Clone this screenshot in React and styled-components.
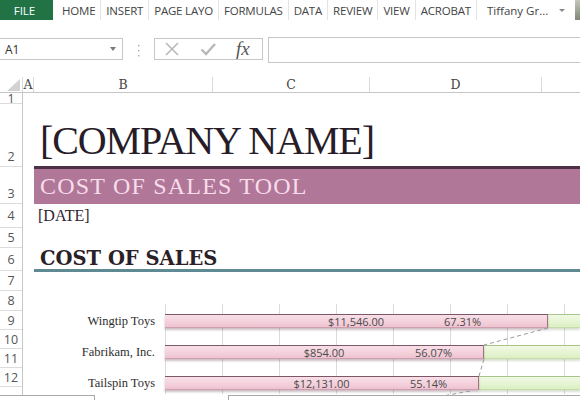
import React from 'react';
import styled, { createGlobalStyle } from 'styled-components';

const Global = createGlobalStyle`
  html, body { margin: 0; padding: 0; background: #fff; overflow: hidden; }
  #root { width: 580px; height: 400px; }
  * { box-sizing: border-box; }
`;

const Page = styled.div`
  position: relative;
  width: 580px;
  height: 400px;
  overflow: hidden;
  background: #fff;
  display: flex;
  flex-direction: column;
  font-family: "Open Sans", "Noto Sans", sans-serif;
`;

/* ---------- Ribbon ---------- */
const Ribbon = styled.div`
  display: flex;
  height: 20px;
  flex-shrink: 0;
`;

const FileTab = styled.div`
  width: 53px;
  background: #217346;
  color: #fff;
  font-size: 11.5px;
  display: flex;
  align-items: center;
  justify-content: center;
  padding-right: 4px;
`;

const Tab = styled.div`
  display: flex;
  align-items: center;
  padding: 0 5px;
  margin-left: ${(p) => (p.$first ? '4px' : '0')};
  border-right: 1px solid #e4e4e4;
  color: #444;
  font-size: 11.5px;
  letter-spacing: -0.2px;
  white-space: nowrap;
`;

const Account = styled.div`
  display: flex;
  align-items: center;
  flex: 1;
  padding-left: 10px;
  color: #444;
  font-size: 11.5px;
  white-space: nowrap;
`;

const AccountArrow = styled.span`
  margin-left: auto;
  margin-right: 10px;
  width: 0;
  height: 0;
  border-left: 3px solid transparent;
  border-right: 3px solid transparent;
  border-top: 3px solid #888;
`;

const Avatar = styled.div`
  width: 5px;
  height: 20px;
  background: linear-gradient(180deg, #c4c7bb 0%, #9aa28f 60%, #7f8872 100%);
`;

const RibbonGap = styled.div`
  height: 17px;
  flex-shrink: 0;
`;

/* ---------- Formula bar ---------- */
const FormulaRow = styled.div`
  display: flex;
  height: 26px;
  flex-shrink: 0;
`;

const NameBox = styled.div`
  width: 123px;
  height: 22px;
  margin-top: 1px;
  border: 1px solid #c6c6c6;
  border-left: none;
  display: flex;
  align-items: center;
  padding: 0 6px 0 5px;
  font-size: 12px;
  color: #333;
`;

const DropTri = styled.span`
  margin-left: auto;
  width: 0;
  height: 0;
  border-left: 3.5px solid transparent;
  border-right: 3.5px solid transparent;
  border-top: 4px solid #7a7a7a;
`;

const Dots = styled.div`
  width: 31px;
  display: flex;
  align-items: center;
  justify-content: center;
`;

const FxBox = styled.div`
  width: 109px;
  height: 22px;
  margin-top: 1px;
  border: 1px solid #c6c6c6;
  display: flex;
  align-items: center;
  padding-left: 9px;
  gap: 20px;
`;

const FxText = styled.span`
  font-family: "Liberation Serif", "DejaVu Serif", serif;
  font-style: italic;
  font-size: 19px;
  color: #555;
  line-height: 1;
  margin-top: -2px;
`;

const FormulaInput = styled.div`
  flex: 1;
  margin-left: 5px;
  height: 26px;
  border: 1px solid #c6c6c6;
  border-right: none;
`;

/* ---------- Column headers ---------- */
const ColHeaderRow = styled.div`
  margin-top: 14px;
  height: 16px;
  flex-shrink: 0;
  display: grid;
  grid-template-columns: 23px 11px 179px 157px 172px 1fr;
  border-bottom: 1px solid #c6c6c6;
`;

const ColHead = styled.div`
  display: flex;
  justify-content: ${(p) => (p.$corner ? 'flex-end' : 'center')};
  align-items: ${(p) => (p.$corner ? 'flex-end' : 'center')};
  padding: ${(p) => (p.$corner ? '0 2px 1px 0' : '0')};
  border-right: ${(p) => (p.$last ? 'none' : '1px solid #dadada')};
  font-family: "DejaVu Serif", "Liberation Serif", serif;
  font-size: 12.5px;
  color: #444;
`;

/* ---------- Sheet ---------- */
const Sheet = styled.div`
  display: flex;
  flex: 1;
  min-height: 0;
`;

const RowHeaders = styled.div`
  width: 23px;
  flex-shrink: 0;
  border-right: 1px solid #c6c6c6;
  display: flex;
  flex-direction: column;
`;

const RowNum = styled.div`
  height: ${(p) => p.$h}px;
  flex-shrink: 0;
  overflow: hidden;
  display: flex;
  align-items: ${(p) => (p.$h > 30 ? 'flex-end' : 'center')};
  justify-content: center;
  padding-bottom: ${(p) => (p.$h > 30 ? '1px' : '0')};
  border-bottom: 1px solid #dcdcdc;
  font-size: 12.5px;
  line-height: 17px;
  color: #555;
`;

const Content = styled.div`
  flex: 1;
  min-width: 0;
  display: flex;
  flex-direction: column;
`;

const Spacer = styled.div`
  height: ${(p) => p.$h}px;
  flex-shrink: 0;
`;

const TitleRow = styled.div`
  height: 65px;
  flex-shrink: 0;
  margin-left: 11px;
  padding: 0 0 5px 6px;
  display: flex;
  align-items: flex-end;
  border-bottom: 3px solid #4b3046;
  font-family: "Liberation Serif", "Times New Roman", serif;
  font-size: 40px;
  line-height: 40px;
  letter-spacing: -1.1px;
  color: #271c28;
  white-space: nowrap;
`;

const Band = styled.div`
  height: 35px;
  flex-shrink: 0;
  margin-left: 11px;
  padding-left: 6px;
  display: flex;
  align-items: center;
  background: #b07799;
  font-family: "Liberation Serif", "Times New Roman", serif;
  font-size: 24px;
  letter-spacing: 1.2px;
  color: #f8dcea;
  white-space: nowrap;
`;

const DateRow = styled.div`
  height: 24px;
  flex-shrink: 0;
  margin-left: 11px;
  padding-left: 4px;
  display: flex;
  align-items: center;
  font-family: "Liberation Serif", "Times New Roman", serif;
  font-size: 16px;
  line-height: 24px;
  color: #2e2330;
`;

const HeadingRow = styled.div`
  height: 24px;
  flex-shrink: 0;
  margin-left: 11px;
  padding-left: 6px;
  display: flex;
  align-items: flex-start;
  border-bottom: 3px solid #5f8a93;
  font-family: "DejaVu Serif", "Liberation Serif", serif;
  font-weight: bold;
  font-size: 19.5px;
  line-height: 21px;
  color: #2b1f28;
  white-space: nowrap;
`;

/* ---------- Chart ---------- */
const Chart = styled.div`
  margin-top: 32px;
  height: 90px;
  flex-shrink: 0;
  display: grid;
  grid-template-columns: 132px 1fr;
  column-gap: 10px;
  grid-template-rows: 10px 14px 17px 14px 17px 14px 4px;
`;

const Gridlines = styled.div`
  grid-column: 2;
  grid-row: 1 / -1;
  background: repeating-linear-gradient(
    to right,
    #dadada 0,
    #dadada 1px,
    transparent 1px,
    transparent 57px
  );
`;

const CatLabel = styled.div`
  grid-column: 1;
  grid-row: ${(p) => p.$row};
  display: flex;
  align-items: center;
  justify-content: flex-end;
  font-family: "Liberation Serif", "Times New Roman", serif;
  font-size: 12.5px;
  color: #2e2e2e;
  white-space: nowrap;
`;

const Track = styled.div`
  grid-column: 2;
  grid-row: ${(p) => p.$row};
  display: flex;
  min-width: 0;
  z-index: 1;
`;

const PinkBar = styled.div`
  position: relative;
  flex-shrink: 0;
  height: 14px;
  display: flex;
  align-items: center;
  justify-content: center;
  background: linear-gradient(180deg, #f8dfe7 0%, #f3d0db 60%, #eec3d0 100%);
  border-top: 1px solid #7c5767;
  border-bottom: 1px solid #cf9fb1;
  border-right: 1px solid #9b7383;
  box-shadow: 0 2px 2px rgba(110, 70, 85, 0.35);
  font-size: 11px;
  color: #4a4a4a;
  white-space: nowrap;
`;

const Pct = styled.span`
  position: absolute;
  left: ${(p) => p.$left}px;
  top: 50%;
  transform: translateY(-50%);
`;

const GreenBar = styled.div`
  flex: 1;
  height: 14px;
  background: linear-gradient(180deg, #f0f9e4 0%, #e5f4d1 60%, #dcefc4 100%);
  border-top: 1px solid #a8c48a;
  border-bottom: 1px solid #c5dcab;
  box-shadow: 0 2px 2px rgba(100, 130, 70, 0.25);
`;

const Connectors = styled.svg`
  grid-column: 2;
  grid-row: 1 / -1;
  width: 100%;
  height: 100%;
  z-index: 2;
  overflow: visible;
`;

/* ---------- Bottom overlay ---------- */
const BottomOverlay = styled.div`
  position: absolute;
  left: 0;
  top: 395px;
  width: 580px;
  height: 10px;
  display: flex;
  z-index: 5;
`;

const OverlayBox = styled.div`
  width: ${(p) => (p.$w ? `${p.$w}px` : 'auto')};
  flex: ${(p) => (p.$w ? '0 0 auto' : '1')};
  background: ${(p) => (p.$blank ? 'transparent' : '#fff')};
  border-top: ${(p) => (p.$blank ? 'none' : '1px solid #a9a9a9')};
  border-right: ${(p) => (p.$right ? '1px solid #a9a9a9' : 'none')};
  border-left: ${(p) => (p.$left ? '1px solid #a9a9a9' : 'none')};
`;

const tabs = ['HOME', 'INSERT', 'PAGE LAYO', 'FORMULAS', 'DATA', 'REVIEW', 'VIEW', 'ACROBAT'];

const rows = [
  { n: 1, h: 11 },
  { n: 2, h: 63 },
  { n: 3, h: 37 },
  { n: 4, h: 24 },
  { n: 5, h: 20 },
  { n: 6, h: 23 },
  { n: 7, h: 20 },
  { n: 8, h: 20 },
  { n: 9, h: 19 },
  { n: 10, h: 19 },
  { n: 11, h: 19 },
  { n: 12, h: 19 },
  { n: 13, h: 30 },
];

const bars = [
  { label: 'Wingtip Toys', value: '$11,546.00', pct: '67.31%', w: 383, pctLeft: 279, row: 2 },
  { label: 'Fabrikam, Inc.', value: '$854.00', pct: '56.07%', w: 319, pctLeft: 250, row: 4 },
  { label: 'Tailspin Toys', value: '$12,131.00', pct: '55.14%', w: 314, pctLeft: 245, row: 6 },
];

export default function App() {
  return (
    <Page>
      <Global />
      <Ribbon>
        <FileTab>FILE</FileTab>
        {tabs.map((t, i) => (
          <Tab key={t} $first={i === 0}>
            {t}
          </Tab>
        ))}
        <Account>
          Tiffany Gr...
          <AccountArrow />
        </Account>
        <Avatar />
      </Ribbon>
      <RibbonGap />

      <FormulaRow>
        <NameBox>
          A1
          <DropTri />
        </NameBox>
        <Dots>
          <svg width="3" height="13" viewBox="0 0 3 13">
            <rect x="1" y="1" width="1.4" height="1.4" fill="#a8a8a8" />
            <rect x="1" y="6" width="1.4" height="1.4" fill="#a8a8a8" />
            <rect x="1" y="11" width="1.4" height="1.4" fill="#a8a8a8" />
          </svg>
        </Dots>
        <FxBox>
          <svg width="16" height="16" viewBox="0 0 16 16">
            <path d="M2 2 L14 14 M14 2 L2 14" stroke="#b8b8b8" strokeWidth="1.6" fill="none" />
          </svg>
          <svg width="16" height="16" viewBox="0 0 16 16">
            <path d="M1.5 8.5 L6 13 L15 3" stroke="#b8b8b8" strokeWidth="2.4" fill="none" />
          </svg>
          <FxText>fx</FxText>
        </FxBox>
        <FormulaInput />
      </FormulaRow>

      <ColHeaderRow>
        <ColHead $corner>
          <svg width="13" height="12" viewBox="0 0 13 12">
            <polygon points="13,0 13,12 0,12" fill="#d2d2d2" />
          </svg>
        </ColHead>
        <ColHead>A</ColHead>
        <ColHead>B</ColHead>
        <ColHead>C</ColHead>
        <ColHead>D</ColHead>
        <ColHead $last />
      </ColHeaderRow>

      <Sheet>
        <RowHeaders>
          {rows.map((r) => (
            <RowNum key={r.n} $h={r.h}>
              {r.n}
            </RowNum>
          ))}
        </RowHeaders>
        <Content>
          <Spacer $h={11} />
          <TitleRow>[COMPANY NAME]</TitleRow>
          <Band>COST OF SALES TOOL</Band>
          <DateRow>[DATE]</DateRow>
          <Spacer $h={20} />
          <HeadingRow>COST OF SALES</HeadingRow>
          <Chart>
            <Gridlines />
            {bars.map((b) => (
              <React.Fragment key={b.label}>
                <CatLabel $row={b.row}>{b.label}</CatLabel>
                <Track $row={b.row}>
                  <PinkBar style={{ width: b.w }}>
                    {b.value}
                    <Pct $left={b.pctLeft}>{b.pct}</Pct>
                  </PinkBar>
                  <GreenBar />
                </Track>
              </React.Fragment>
            ))}
            <Connectors>
              <g stroke="#9a9a9a" strokeWidth="1" strokeDasharray="4 3" fill="none">
                <line x1="383" y1="24" x2="319" y2="41" />
                <line x1="319" y1="55" x2="314" y2="72" />
                <line x1="305" y1="87" x2="240" y2="99" />
              </g>
            </Connectors>
          </Chart>
        </Content>
      </Sheet>

      <BottomOverlay>
        <OverlayBox $w={95} $right />
        <OverlayBox $w={133} $blank />
        <OverlayBox $left />
      </BottomOverlay>
    </Page>
  );
}
